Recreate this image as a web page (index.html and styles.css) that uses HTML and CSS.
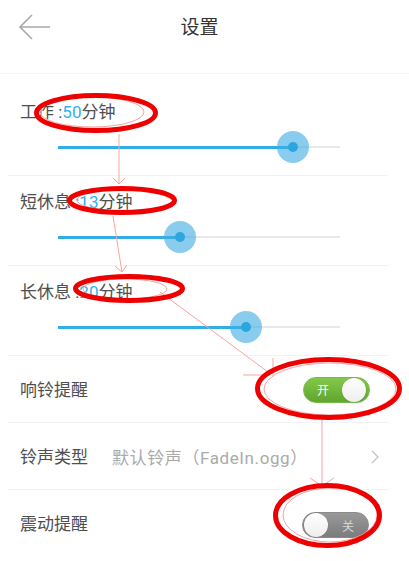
FILE: index.html
```html
<!DOCTYPE html>
<html lang="zh-CN">
<head>
  <meta charset="UTF-8" />
  <meta name="viewport" content="width=device-width, initial-scale=1.0" />
  <title>设置</title>
  <link rel="stylesheet" href="styles.css">
</head>
<body>
  <div class="page">
    <div class="header">
      <svg class="back" width="34" height="28" viewBox="0 0 34 28">
        <path d="M32 14H3M14 2L2 14l12 12" fill="none" stroke="#a9a9a9" stroke-width="1.6" />
      </svg>
      <h1>设置</h1>
    </div>

    <div class="list">
      <div class="row slider-row first">
        <div class="label">工作 :<span class="num">50</span>分钟</div>
        <div class="slider">
          <div class="fill" style="width: 83.3%"></div>
          <div class="thumb"></div>
          <div class="rest"></div>
        </div>
      </div>
      <div class="row slider-row">
        <div class="label">短休息 :<span class="num">13</span>分钟</div>
        <div class="slider">
          <div class="fill" style="width: 43.3%"></div>
          <div class="thumb"></div>
          <div class="rest"></div>
        </div>
      </div>
      <div class="row slider-row">
        <div class="label">长休息 :<span class="num">20</span>分钟</div>
        <div class="slider">
          <div class="fill" style="width: 66.7%"></div>
          <div class="thumb"></div>
          <div class="rest"></div>
        </div>
      </div>
      <div class="row item">
        <div class="label">响铃提醒</div>
        <div class="switch on"><span class="txt">开</span><span class="knob"></span></div>
      </div>
      <div class="row item">
        <div class="label">铃声类型</div>
        <div class="value">默认铃声（FadeIn.ogg）</div>
        <svg class="chev" width="10" height="16" viewBox="0 0 10 16">
          <path d="M2 2l6 6-6 6" fill="none" stroke="#c4c4c4" stroke-width="1.3" />
        </svg>
      </div>
      <div class="row item last">
        <div class="label">震动提醒</div>
        <div class="switch off"><span class="knob"></span><span class="txt">关</span></div>
      </div>
    </div>

    <svg class="marks" width="409" height="561" viewBox="0 0 409 561">
      <g fill="none" stroke="#f7a3a3" stroke-width="1">
        <ellipse cx="92" cy="112" rx="52" ry="15" />
        <ellipse cx="125" cy="200" rx="48" ry="11" />
        <ellipse cx="125" cy="289" rx="42" ry="10" />
        <ellipse cx="330" cy="389" rx="66" ry="26" />
        <ellipse cx="330" cy="515" rx="47" ry="27" />
        <path d="M119 134V184M113 178l6 6 6-6" />
        <path d="M113 216L122 272M115 266l7 6 5-7" />
        <path d="M160 292L268 372M243 375H270M273 358V376" />
        <path d="M322 418V486M310 478l12 8 12-8" />
      </g>
      <g fill="none" stroke="#ee0000" stroke-width="5">
        <ellipse cx="96" cy="113" rx="59.5" ry="17.5" />
        <ellipse cx="122" cy="200.5" rx="52.5" ry="12" />
        <ellipse cx="129" cy="288.5" rx="53.5" ry="12" />
        <ellipse cx="328.5" cy="388.5" rx="71" ry="29" />
        <ellipse cx="327.5" cy="515.5" rx="52" ry="30" />
      </g>
    </svg>
  </div>
</body>
</html>
```

FILE: styles.css
```css
body { margin: 0; background: #fff; font-family: "Roboto", "Noto Sans CJK SC", sans-serif; color: #4a4a4a; }
.page { position: relative; width: 409px; height: 561px; overflow: hidden; }

.header { height: 73px; display: flex; align-items: flex-start; justify-content: center; position: relative; border-bottom: 1px solid #f4f4f4; }
.header h1 { margin: 0; font-size: 19px; font-weight: normal; color: #333; line-height: 56px; margin-left: -10px; }
.back { position: absolute; left: 18px; top: 13px; }

.list { padding-top: 12px; }
.row { margin: 0 21px 0 8px; border-bottom: 1px solid #f2f2f2; padding-left: 12px; }
.row.last { border-bottom: none; }
.label { font-size: 17px; line-height: 22px; color: #4f4f4f; }
.num { color: #2fb2ee; }

.slider-row { height: 90px; padding-top: 15px; box-sizing: border-box; }
.slider { display: flex; align-items: center; width: 282px; margin: 23px 0 0 38px; height: 2px; }
.fill { height: 3px; background: #33ade6; }
.rest { flex: 1; height: 2px; background: #e8e8e8; }
.thumb { width: 0; height: 0; position: relative; }
.thumb::before { content: ""; position: absolute; left: -16px; top: -16px; width: 32px; height: 32px; border-radius: 50%; background: rgba(64, 172, 227, 0.62); }
.thumb::after { content: ""; position: absolute; left: -5px; top: -5px; width: 10px; height: 10px; border-radius: 50%; background: #2ba6df; }

.item { height: 67px; display: flex; align-items: center; box-sizing: border-box; padding-top: 1px; }
.value { margin-left: 24px; font-size: 17px; color: #aaa; flex: 1; letter-spacing: 0.6px; }
.chev { margin-right: 8px; }

.switch { margin-left: auto; margin-right: 18px; width: 67px; height: 26px; border-radius: 13px; display: flex; align-items: center; box-sizing: border-box; }
.switch .txt { font-size: 12px; color: #fff; width: 38px; text-align: center; }
.switch .knob { width: 24px; height: 24px; border-radius: 50%; background: linear-gradient(#fff, #eee); box-shadow: 0 0 1px rgba(0, 0, 0, 0.3); }
.switch.on { background: linear-gradient(#82c94a, #5fa52f); padding-right: 1px; border: 1px solid #7ab84a; }
.switch.off { background: linear-gradient(#999, #7c7c7c); padding-left: 1px; border: 1px solid #8a8a8a; margin-top: 2px; margin-right: 19px; }
.switch.off .txt { color: #d6d6d6; width: 40px; }

.marks { position: absolute; left: 0; top: 0; pointer-events: none; }
```
